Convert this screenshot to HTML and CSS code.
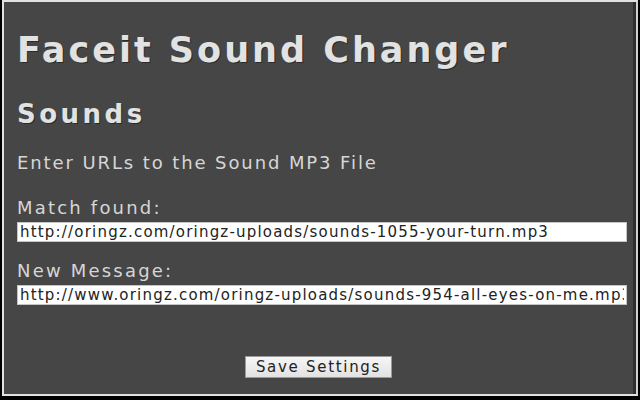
FILE: index.html
```html
<!DOCTYPE html>
<html lang="en">
<head>
  <meta charset="UTF-8" />
  <title>Faceit Sound Changer</title>
  <link rel="stylesheet" href="styles.css">
</head>
<body>
  <div class="frame">
    <h1>Faceit Sound Changer</h1>
    <h2>Sounds</h2>
    <p class="intro">Enter URLs to the Sound MP3 File</p>

    <label class="field">
      <span>Match found:</span>
      <input type="text" value="http://oringz.com/oringz-uploads/sounds-1055-your-turn.mp3" />
    </label>
    <label class="field">
      <span>New Message:</span>
      <input type="text" value="http://www.oringz.com/oringz-uploads/sounds-954-all-eyes-on-me.mp3" />
    </label>

    <div class="actions">
      <button id="save">Save Settings</button>
    </div>
  </div>
</body>
</html>
```

FILE: styles.css
```css
html, body {
  margin: 0;
  height: 100%;
}
body {
  background: #000;
  font-family: 'DejaVu Sans', Verdana, sans-serif;
  color: #d6d6d6;
}
.frame {
  box-sizing: border-box;
  width: 636px;
  height: 396px;
  margin-left: 2px;
  border: 2px solid #e2e2e2;
  border-right-color: #d0d0d0;
  background: #464646;
  box-shadow: inset -3px 0 0 #2e2e2e;
  padding: 0 8px 0 13px;
  display: flex;
  flex-direction: column;
}
h1 {
  font-size: 35px;
  font-weight: 700;
  letter-spacing: 3px;
  margin: 28px 0 0;
  line-height: 40px;
  color: #e2e2e2;
  text-shadow: 1px 1px 0 #2a2a2a;
}
h2 {
  font-size: 26px;
  font-weight: 700;
  letter-spacing: 3.5px;
  margin: 29px 0 0;
  line-height: 30px;
  color: #e2e2e2;
  text-shadow: 1px 1px 0 #2a2a2a;
}
.intro {
  font-size: 18px;
  letter-spacing: 1.9px;
  margin: 23px 0 0;
  line-height: 22px;
}
.field {
  display: flex;
  flex-direction: column;
  gap: 3px;
  margin-top: 23px;
}
.field + .field {
  margin-top: 18px;
}
.field span {
  font-size: 18px;
  letter-spacing: 2.2px;
  line-height: 22px;
}
.field input {
  box-sizing: border-box;
  width: 610px;
  height: 20px;
  margin: 0;
  padding: 0 2px;
  border: 1px solid #c4c4c4;
  background: #fff;
  font-family: 'DejaVu Sans', Verdana, sans-serif;
  font-size: 15px;
  letter-spacing: 1.2px;
  color: #222;
  outline: none;
}
.actions {
  display: flex;
  justify-content: center;
  margin-top: 51px;
  padding-right: 8px;
}
.actions button {
  width: 147px;
  height: 22px;
  padding: 0;
  border: 1px solid #9a9a9a;
  border-radius: 0;
  background: linear-gradient(#f6f6f6, #e2e2e2);
  font-family: 'DejaVu Sans', Verdana, sans-serif;
  font-size: 15px;
  letter-spacing: 1.7px;
  color: #222;
  cursor: pointer;
}
```
